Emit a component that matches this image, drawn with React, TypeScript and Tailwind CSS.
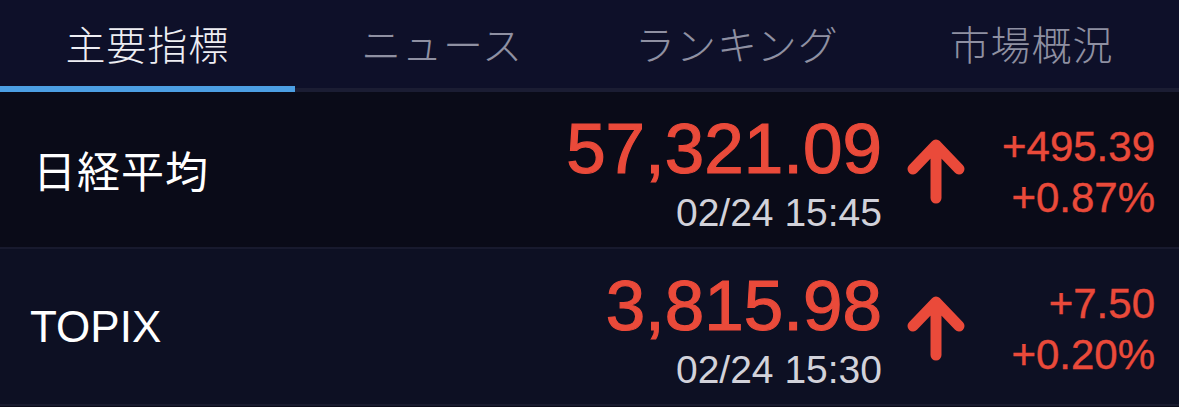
import React from "react";

const tabs = ["主要指標", "ニュース", "ランキング", "市場概況"];

type Row = {
  name: string;
  cjk: boolean;
  value: string;
  time: string;
  change: string;
  pct: string;
  bg: string;
};

const rows: Row[] = [
  {
    name: "日経平均",
    cjk: true,
    value: "57,321.09",
    time: "02/24 15:45",
    change: "+495.39",
    pct: "+0.87%",
    bg: "bg-[#0a0b18]",
  },
  {
    name: "TOPIX",
    cjk: false,
    value: "3,815.98",
    time: "02/24 15:30",
    change: "+7.50",
    pct: "+0.20%",
    bg: "bg-[#0d1023]",
  },
];

function UpArrow() {
  return (
    <svg width="58" height="66" viewBox="0 0 58 66" fill="none">
      <path
        d="M29 60 L29 8 M6 31 L29 7 L52 31"
        stroke="#ea4a3a"
        strokeWidth="11"
        strokeLinecap="round"
        strokeLinejoin="round"
      />
    </svg>
  );
}

export default function App() {
  return (
    <div className="w-[1179px] h-[407px] bg-[#0a0b18] overflow-hidden">
      <div className="flex bg-[#0e1029]">
        {tabs.map((t, i) => (
          <div key={t} className="flex-1 flex flex-col">
            <div
              className={`h-[86px] flex items-center justify-center text-[40px] font-light leading-none tracking-[1px] font-['Noto_Sans_CJK_JP',sans-serif] ${
                i === 0 ? "text-[#eeeef3]" : "text-[#8f90a2]"
              }`}
            >
              {t}
            </div>
            {i === 0 ? (
              <div className="h-[6px] bg-[#4c9fe3]" />
            ) : (
              <div className="h-[6px] flex flex-col">
                <div className="h-[2px]" />
                <div className="h-[4px] bg-[#1b1d33]" />
              </div>
            )}
          </div>
        ))}
      </div>
      {rows.map((r) => (
        <div key={r.name} className={`${r.bg} border-b-2 border-[#181a2e]`}>
          <div className="h-[155px] flex items-center pl-[33px] pr-[24px]">
            <div
              className={`text-white leading-none ${
                r.cjk
                  ? "text-[43px] font-['Noto_Sans_CJK_JP',sans-serif] tracking-[1px]"
                  : "text-[44px] font-['Liberation_Sans',sans-serif] -ml-[3px]"
              }`}
            >
              {r.name}
            </div>
            <div className="ml-auto flex items-center font-['Liberation_Sans',Arial,sans-serif]">
              <div className="flex flex-col items-end mt-[5px]">
                <div className="text-[71px] leading-none text-[#ea4a3a] [-webkit-text-stroke:1.2px_#ea4a3a]">
                  {r.value}
                </div>
                <div className="text-[39px] leading-none text-[#d2d2da] mt-[9px]">
                  {r.time}
                </div>
              </div>
              <div className="ml-[25px] mt-[2px]">
                <UpArrow />
              </div>
              <div className="w-[190px] flex flex-col items-end text-[42px] leading-[51px] text-[#ea4a3a] mt-[5px] [-webkit-text-stroke:0.4px_#ea4a3a]">
                <div>{r.change}</div>
                <div>{r.pct}</div>
              </div>
            </div>
          </div>
        </div>
      ))}
    </div>
  );
}
